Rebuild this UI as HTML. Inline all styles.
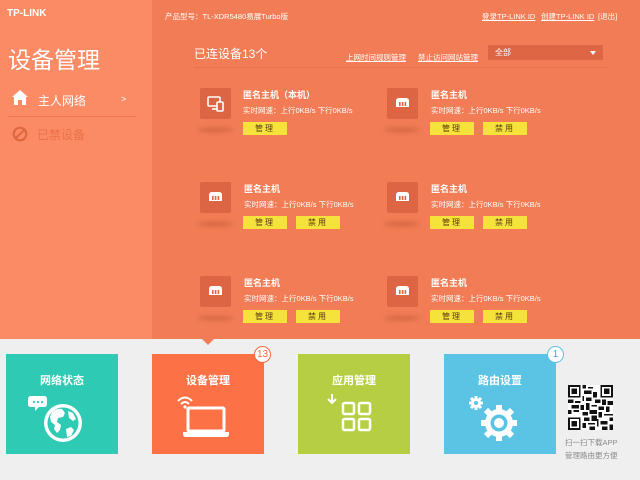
<!DOCTYPE html>
<html><head><meta charset="utf-8">
<style>
*{margin:0;padding:0;box-sizing:border-box}
body{width:640px;height:480px;overflow:hidden;background:#efefef;font-family:"Liberation Sans","Noto Sans CJK SC",sans-serif;position:relative}
.abs{position:absolute}
#side{left:0;top:0;width:152px;height:339px;background:#fb8b64}
#main{left:152px;top:0;width:488px;height:339px;background:#f17c55}
.w{color:#fff}
.card .ic{position:absolute;width:31px;height:31px;background:#de6543;border-radius:2px}
.card .sh{position:absolute;width:36px;height:4px;border-radius:50%;background:rgba(150,60,30,.35);filter:blur(2px)}
.card .nm{position:absolute;font-size:9px;font-weight:bold;color:#fff;white-space:nowrap}
.card .sp{position:absolute;font-size:7.5px;color:#fff;white-space:nowrap}
.btn{position:absolute;width:44px;height:13px;background:#f5e23a;color:#5a3a10;font-size:8px;text-align:center;line-height:13px;letter-spacing:2px}
.tile{position:absolute;top:354px;width:112px;height:100px}
.tile .t{position:absolute;top:18px;width:100%;text-align:center;color:#fff;font-size:11px;font-weight:bold}
.badge{position:absolute;width:17px;height:17px;border-radius:50%;background:#fff;font-size:10px;text-align:center;line-height:15px}
</style></head><body>
<div id="side" class="abs"></div>
<div id="main" class="abs"></div>

<div class="abs w" style="left:7px;top:8px;font-size:10px;font-weight:bold;letter-spacing:0">TP-LINK</div>
<div class="abs w" style="left:8px;top:41px;font-size:23px">设备管理</div>
<svg class="abs" style="left:12px;top:90px" width="16" height="15" viewBox="0 0 16 15"><path d="M8 0L0 7h2v8h4v-5h4v5h4V7h2z" fill="#fff"/></svg>
<div class="abs w" style="left:38px;top:92px;font-size:12px">主人网络</div>
<div class="abs w" style="left:121px;top:94px;font-size:9px">&gt;</div>
<div class="abs" style="left:8px;top:116px;width:128px;height:1px;background:#f0774f"></div>
<svg class="abs" style="left:12px;top:126px" width="16" height="16" viewBox="0 0 16 16"><circle cx="8" cy="8" r="6.3" fill="none" stroke="#e0683f" stroke-width="2.2"/><path d="M4 12L12 4" stroke="#e0683f" stroke-width="2.2"/></svg>
<div class="abs" style="left:37px;top:126px;font-size:12px;color:#ea7048">已禁设备</div>

<div class="abs w" style="left:165px;top:11px;font-size:7.5px">产品型号：TL-XDR5480易展Turbo版</div>
<div class="abs w" style="left:482px;top:11px;font-size:7.5px;text-decoration:underline">登录TP-LINK ID</div>
<div class="abs w" style="left:541px;top:11px;font-size:7.5px;text-decoration:underline">创建TP-LINK ID</div>
<div class="abs w" style="left:598px;top:11px;font-size:7.5px">[退出]</div>

<div class="abs w" style="left:194px;top:45px;font-size:12px">已连设备13个</div>
<div class="abs w" style="left:346px;top:52px;font-size:7.5px;text-decoration:underline">上网时间规则管理</div>
<div class="abs w" style="left:418px;top:52px;font-size:7.5px;text-decoration:underline">禁止访问网站管理</div>
<div class="abs" style="left:488px;top:45px;width:115px;height:15px;background:#de6644"></div>
<div class="abs w" style="left:495px;top:47px;font-size:8px">全部</div>
<div class="abs" style="left:590px;top:51px;width:0;height:0;border-left:3px solid transparent;border-right:3px solid transparent;border-top:4px solid #fff"></div>
<div class="abs" style="left:194px;top:67px;width:414px;height:1px;background:#e86f48"></div>

<!-- cards -->
<div class="card">
 <div class="ic" style="left:200px;top:88px"><svg width="31" height="31" viewBox="0 0 31 31"><rect x="8" y="9" width="12" height="9" rx="1" fill="none" stroke="#fff" stroke-width="1.6"/><path d="M12 21h5" stroke="#fff" stroke-width="1.6"/><rect x="17" y="14" width="6" height="9" rx="1" fill="#de6543" stroke="#fff" stroke-width="1.6"/></svg></div>
 <div class="sh" style="left:197px;top:128px"></div>
 <div class="nm" style="left:243px;top:88px">匿名主机（本机）</div>
 <div class="sp" style="left:243px;top:105px">实时网速：上行0KB/s 下行0KB/s</div>
 <div class="btn" style="left:243px;top:122px">管理</div>
</div>

<div id="cards"></div>
<script>
var pos=[[387,88,0],[200,182,1],[387,182,1],[200,276,1],[387,276,1]];
var h='';
pos.forEach(function(p){var x=p[0],y=p[1];
h+='<div class="card"><div class="ic" style="left:'+x+'px;top:'+y+'px"><svg width="31" height="31" viewBox="0 0 31 31"><path d="M9 19v-6q0-3 3-3h7q3 0 3 3v6z" fill="#fff"/><rect x="12" y="14" width="1.6" height="4" fill="#de6543"/><rect x="14.8" y="14" width="1.6" height="4" fill="#de6543"/><rect x="17.6" y="14" width="1.6" height="4" fill="#de6543"/></svg></div>'+
'<div class="sh" style="left:'+(x-3)+'px;top:'+(y+40)+'px"></div>'+
'<div class="nm" style="left:'+(x+44)+'px;top:'+(y+0)+'px">匿名主机</div>'+
'<div class="sp" style="left:'+(x+44)+'px;top:'+(y+17)+'px">实时网速：上行0KB/s 下行0KB/s</div>'+
'<div class="btn" style="left:'+(x+43)+'px;top:'+(y+34)+'px">管理</div>'+
'<div class="btn" style="left:'+(x+96)+'px;top:'+(y+34)+'px">禁用</div></div>';});
document.getElementById('cards').innerHTML=h;
</script>

<!-- notch -->
<div class="abs" style="left:202px;top:339px;width:0;height:0;border-left:6px solid transparent;border-right:6px solid transparent;border-top:6px solid #f17c55"></div>

<!-- tiles -->
<div class="tile" style="left:6px;background:#2ecab3"><div class="t">网络状态</div>
<svg class="abs" style="left:22px;top:40px" width="60" height="50" viewBox="0 0 60 50"><path d="M3 2h13q3 0 3 3v5q0 3-3 3h-5l-4 4v-4h-4q-3 0-3-3V5q0-3 3-3z" fill="#fff"/><circle cx="6" cy="8" r="1.1" fill="#2ecab3"/><circle cx="10" cy="8" r="1.1" fill="#2ecab3"/><circle cx="14" cy="8" r="1.1" fill="#2ecab3"/><circle cx="35" cy="29" r="19" fill="#fff"/><circle cx="35" cy="29" r="15.5" fill="#2ecab3"/><path d="M24 18q5-4 10-3l3 4-2 4-5 1-1 4 4 3-1 5-3 3-3-4 1-4-4-3-1-5zM40 17l5 2 3 6-3 2-4-3zM38 35l5-2 3 3-3 6-4 1z" fill="#fff"/></svg></div>

<div class="tile" style="left:152px;background:#fd7147"><div class="t">设备管理</div>
<svg class="abs" style="left:24px;top:40px" width="66" height="48" viewBox="0 0 66 48"><path d="M2 7q7-7 14 0M5 10q4-4 8 0" fill="none" stroke="#fff" stroke-width="2"/><circle cx="9" cy="13" r="1.6" fill="#fff"/><rect x="12" y="14" width="36" height="23" rx="1" fill="none" stroke="#fff" stroke-width="3"/><path d="M7 38h46v2q0 3-3 3H10q-3 0-3-3z" fill="#fff"/></svg></div>
<div class="badge" style="left:254px;top:346px;border:1.5px solid #f26a3f;color:#f26a3f">13</div>

<div class="tile" style="left:298px;background:#b5ce43"><div class="t">应用管理</div>
<svg class="abs" style="left:26px;top:40px" width="60" height="50" viewBox="0 0 60 50"><path d="M8 0v8M4 5l4 4 4-4" stroke="#fff" stroke-width="2" fill="none"/><g fill="none" stroke="#fff" stroke-width="2.5"><rect x="19" y="9" width="11" height="11" rx="1.5"/><rect x="35" y="9" width="11" height="11" rx="1.5"/><rect x="19" y="25" width="11" height="11" rx="1.5"/><rect x="35" y="25" width="11" height="11" rx="1.5"/></g></svg></div>

<div class="tile" style="left:444px;background:#5bc4e4"><div class="t">路由设置</div>
<svg class="abs" style="left:22px;top:38px" width="64" height="52" viewBox="0 0 64 52"><g fill="#fff"><circle cx="10" cy="11" r="5"/><g stroke="#fff" stroke-width="3"><path d="M10 4v14M3 11h14M5 6l10 10M15 6L5 16"/></g><circle cx="33" cy="31" r="14"/><g stroke="#fff" stroke-width="6"><path d="M33 13v36M15 31h36M20 18l26 26M46 18L20 44"/></g></g><circle cx="10" cy="11" r="2" fill="#5bc4e4"/><circle cx="33" cy="31" r="8.5" fill="#5bc4e4"/><circle cx="33" cy="31" r="5" fill="#fff"/></svg></div>
<div class="badge" style="left:547px;top:346px;border:1.5px solid #5bc4e4;color:#3aa9cf">1</div>

<!-- QR -->
<svg class="abs" style="left:568px;top:385px" width="45" height="45" viewBox="0 0 25 25" shape-rendering="crispEdges">
<rect width="25" height="25" fill="#fff"/>
<g fill="#111"><rect x="0" y="0" width="7" height="7"/><rect x="18" y="0" width="7" height="7"/><rect x="0" y="18" width="7" height="7"/></g>
<g fill="#fff"><rect x="1" y="1" width="5" height="5"/><rect x="19" y="1" width="5" height="5"/><rect x="1" y="19" width="5" height="5"/></g>
<g fill="#111"><rect x="2" y="2" width="3" height="3"/><rect x="20" y="2" width="3" height="3"/><rect x="2" y="20" width="3" height="3"/>
<path d="M8 0h2v2H8zM11 1h3v1h-3zM9 3h4v2H9zM14 4h2v3h-2zM8 6h1v3H8zM10 7h3v2h-3zM0 8h3v2H0zM4 9h3v1H4zM15 8h3v2h-3zM19 8h2v3h-2zM22 9h3v2h-3zM2 11h4v2H2zM7 11h2v3H7zM10 10h2v4h-2zM13 11h3v1h-3zM17 12h3v2h-3zM21 12h2v3h-2zM0 14h2v2H0zM3 14h3v1H3zM12 14h4v2h-4zM8 15h3v2H8zM17 15h2v3h-2zM20 16h5v1h-5zM9 18h3v2H9zM13 17h3v3h-3zM8 21h2v3H8zM11 21h4v1h-4zM16 19h1v4h-1zM18 20h4v2h-4zM12 23h3v2h-3zM23 18h2v2h-2zM19 23h3v2h-3zM23 22h2v3h-2z"/></g></svg>
<div class="abs" style="left:565px;top:436px;font-size:7.5px;color:#8a8a8a;line-height:13px">扫一扫下载APP<br>管理路由更方便</div>
</body></html>
